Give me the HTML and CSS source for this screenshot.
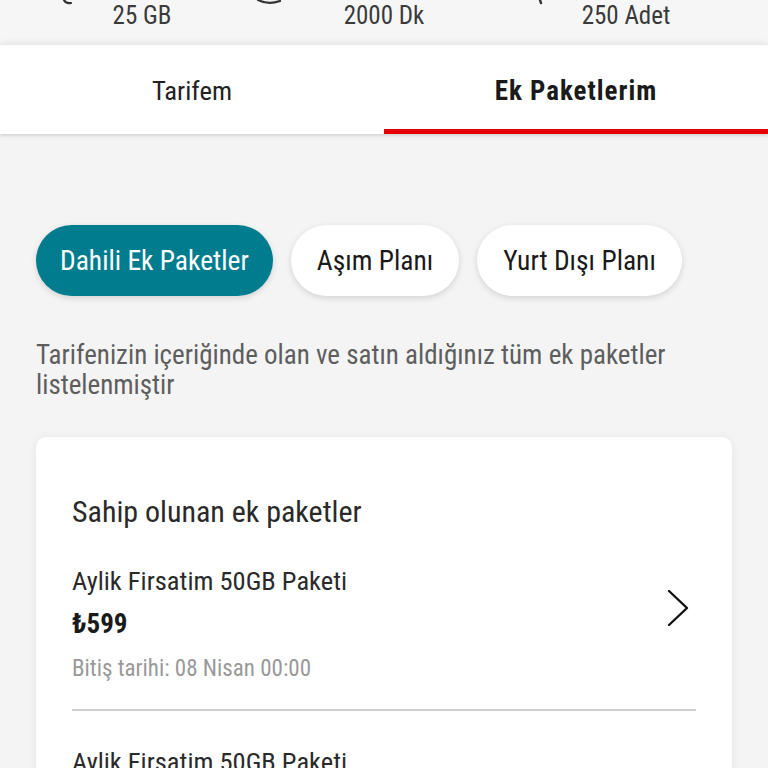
FILE: index.html
```html
<!DOCTYPE html>
<html lang="tr">
<head>
<meta charset="utf-8">
<title>Ek Paketlerim</title>
<link rel="stylesheet" href="styles.css">
</head>
<body>
<div class="top">
  <svg class="top-icons" width="768" height="6" viewBox="0 0 768 6">
    <path d="M64 0 Q66 4 71 3" fill="none" stroke="#333" stroke-width="2.2" stroke-linecap="round"/>
    <path d="M258 0 Q268 5 280 1" fill="none" stroke="#333" stroke-width="2.2" stroke-linecap="round"/>
    <path d="M540 0 L541 3" fill="none" stroke="#333" stroke-width="2.4" stroke-linecap="round"/>
  </svg>
  <div class="stats">
    <div class="stat">25 GB</div>
    <div class="stat">2000 Dk</div>
    <div class="stat">250 Adet</div>
  </div>
</div>
<nav class="tabs">
  <div class="tab">Tarifem</div>
  <div class="tab active">Ek Paketlerim</div>
</nav>
<main class="content">
  <div class="pills">
    <div class="pill selected">Dahili Ek Paketler</div>
    <div class="pill">Aşım Planı</div>
    <div class="pill">Yurt Dışı Planı</div>
  </div>
  <p class="desc">Tarifenizin içeriğinde olan ve satın aldığınız tüm ek paketler listelenmiştir</p>
  <section class="card">
    <h2 class="card-title">Sahip olunan ek paketler</h2>
    <div class="item">
      <div class="item-text">
        <div class="item-name">Aylik Firsatim 50GB Paketi</div>
        <div class="item-price">₺599</div>
        <div class="item-date">Bitiş tarihi: 08 Nisan 00:00</div>
      </div>
      <svg class="chev" width="24" height="38" viewBox="0 0 24 38">
        <path d="M3 2 L21 19 L3 36" fill="none" stroke="#111" stroke-width="2.4" stroke-linecap="round" stroke-linejoin="round"/>
      </svg>
    </div>
    <div class="item">
      <div class="item-text">
        <div class="item-name">Aylik Firsatim 50GB Paketi</div>
      </div>
    </div>
  </section>
</main>
</body>
</html>
```
FILE: styles.css
```css
* { box-sizing: border-box; }
html, body { margin: 0; padding: 0; }
body {
  background: #f4f4f4;
  font-family: "Roboto Condensed", "Liberation Sans Narrow", Roboto, "Liberation Sans", sans-serif;
  color: #333;
  width: 768px;
  height: 768px;
  overflow: hidden;
}
.top {
  background: #f6f6f6;
  height: 45px;
}
.top-icons { display: block; height: 6px; }
.stats {
  display: grid;
  grid-template-columns: repeat(3, 1fr);
  padding: 0 21px;
  margin-top: -5px;
}
.stat {
  text-align: center;
  font-size: 25px;
  line-height: 30px;
  color: #3a3a3a;
}
.tabs {
  display: flex;
  background: #fff;
  height: 89px;
  box-shadow: 0 -3px 6px rgba(0,0,0,0.06), 0 2px 3px rgba(0,0,0,0.12);
  position: relative;
}
.tab {
  flex: 1;
  display: flex;
  align-items: center;
  justify-content: center;
  font-size: 26.7px;
  color: #222;
  padding-top: 8px;
  border-bottom: 5px solid transparent;
}
.tab.active {
  font-weight: bold;
  font-size: 27px;
  letter-spacing: 1px;
  color: #1a1a1a;
  border-bottom-color: #e60000;
}
.content {
  padding: 91px 36px 0 36px;
}
.pills {
  display: flex;
  gap: 18px;
}
.pill {
  height: 71px;
  border-radius: 36px;
  background: #fff;
  display: flex;
  align-items: center;
  padding: 0 26px;
  font-size: 27.5px;
  color: #1a1a1a;
  box-shadow: 0 2px 6px rgba(0,0,0,0.14);
}
.pill.selected {
  background: #007c8f;
  color: #fff;
  padding: 0 24px;
}
.desc {
  margin: 44px 0 0 0;
  font-size: 27px;
  line-height: 30px;
  color: #5e5e5e;
  max-width: 680px;
}
.card {
  margin-top: 37px;
  background: #fff;
  border-radius: 10px;
  box-shadow: 0 1px 8px rgba(0,0,0,0.08);
  padding: 57px 36px 0 36px;
}
.card-title {
  margin: 0;
  font-weight: normal;
  font-size: 30px;
  line-height: 36px;
  color: #2a2a2a;
}
.item {
  display: flex;
  align-items: flex-start;
  border-bottom: 2px solid #cfcfcf;
  padding: 35px 0 25px 0;
}
.item:last-child { border-bottom: none; }
.item-text { flex: 1; }
.item-name {
  font-size: 26.5px;
  line-height: 32px;
  color: #2a2a2a;
}
.item-price {
  font-size: 27px;
  line-height: 32px;
  margin-top: 11px;
  color: #1a1a1a;
  font-weight: bold;
}
.item-date {
  font-size: 23px;
  line-height: 30px;
  margin-top: 14px;
  color: #999;
}
.chev { margin-right: 6px; margin-top: 24px; }
```
